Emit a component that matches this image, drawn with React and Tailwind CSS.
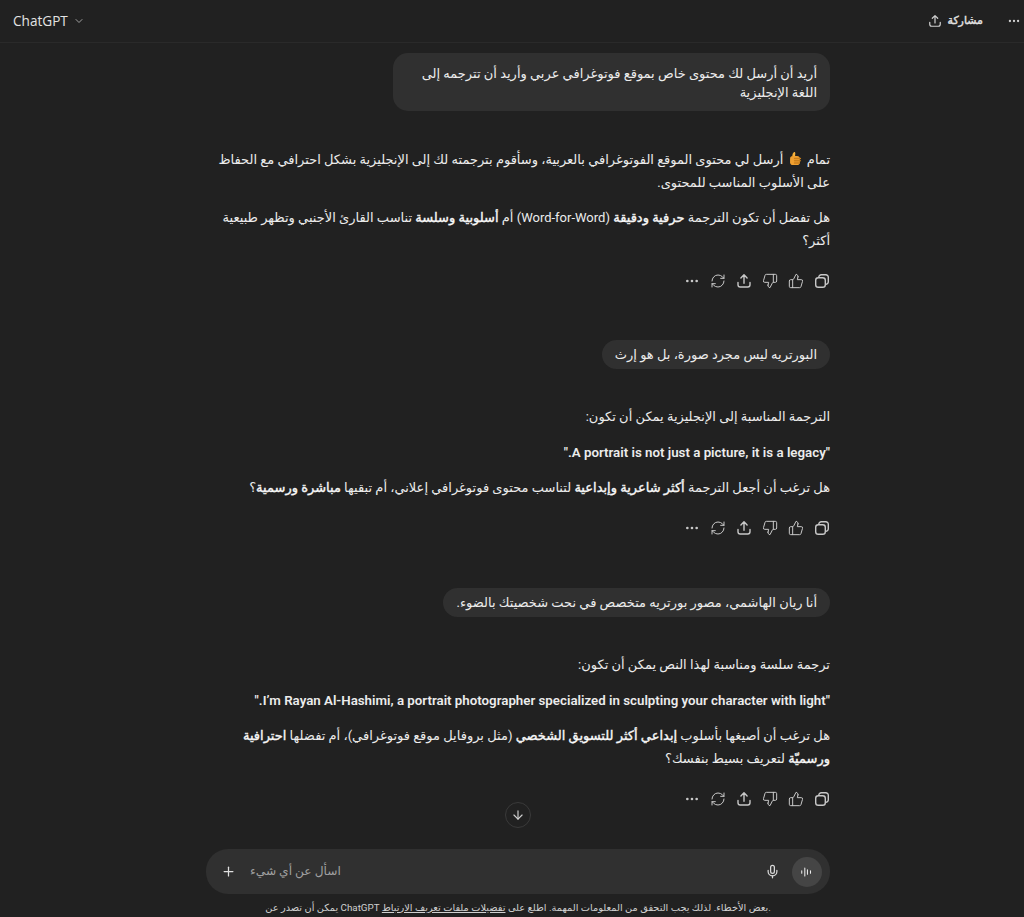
import React from "react";
import { ChevronDown, ThumbsUp, ThumbsDown, RefreshCw, Ellipsis, Plus, Mic, ArrowDown } from "lucide-react";

function ThumbEmoji() {
  return (
    <svg viewBox="0 0 16 16" className="inline-block w-[15px] h-[15px] mx-[1px] align-[-2px]">
      <path d="M6.2 1.2c1-.4 1.7.3 1.6 1.3L7.5 5.6h-3L5 3z" fill="#f7b23b" />
      <rect x="2.2" y="5.4" width="10.4" height="9.6" rx="3" fill="#f0a030" />
      <path d="M7 8h6.2M7 10.4h6M7 12.8h5" stroke="#c97f1c" strokeWidth="1.6" strokeLinecap="round" />
    </svg>
  );
}

function ShareIcon({ size = 16 }) {
  return (
    <svg viewBox="0 0 16 16" width={size} height={size} fill="none" stroke="currentColor" strokeWidth="1.4" strokeLinecap="round" strokeLinejoin="round">
      <path d="M8 10.2V2M4.9 4.9 8 1.8l3.1 3.1" />
      <path d="M2 9.5v2.3A2.2 2.2 0 0 0 4.2 14h7.6a2.2 2.2 0 0 0 2.2-2.2V9.5" />
    </svg>
  );
}

function CopyIcon() {
  return (
    <svg viewBox="0 0 16 16" width="16" height="16" fill="none" stroke="currentColor" strokeWidth="1.4" strokeLinejoin="round">
      <rect x="1.7" y="4.7" width="9.6" height="9.6" rx="2.6" />
      <path d="M4.8 4.6V4.2a2.5 2.5 0 0 1 2.5-2.5h4.5a2.5 2.5 0 0 1 2.5 2.5v4.5a2.5 2.5 0 0 1-2.5 2.5h-.4" />
    </svg>
  );
}

function Actions() {
  return (
    <div className="flex items-center gap-[10px] h-4 text-[#c8c8c8] mt-[21px]">
      <CopyIcon />
      <ThumbsUp size={16} strokeWidth={1.5} />
      <ThumbsDown size={16} strokeWidth={1.5} />
      <ShareIcon />
      <RefreshCw size={16} strokeWidth={1.5} />
      <Ellipsis size={16} strokeWidth={2} />
    </div>
  );
}

function UserBubble({ children, className = "" }) {
  return (
    <div className={"w-fit max-w-[70%] bg-[#303030] rounded-[15px] px-[13px] text-[13px] leading-[19px] text-[#ececec] " + className}>
      {children}
    </div>
  );
}

function Para({ children }) {
  return <p className="text-[13px] leading-[23px] text-[#ececec]">{children}</p>;
}

// arabic bold falls on a much wider face, so thicken the regular one instead
function Strong({ children }) {
  return <span className="[-webkit-text-stroke:0.4px_#ececec] text-white">{children}</span>;
}

function Quote({ children }) {
  return <b className="text-[13.3px] font-semibold">{children}</b>;
}

export default function App() {
  return (
    <div className="h-screen flex flex-col bg-[#212121] overflow-hidden font-['Roboto','DejaVu_Sans',sans-serif]">
      <header className="h-[43px] shrink-0 flex items-center justify-between pl-[13px] pr-[3px] border-b border-[#2a2a2a]">
        <div className="flex items-center gap-[5px] text-[#e3e3e3]">
          <span className="text-[13.6px] font-['Open_Sans']">ChatGPT</span>
          <ChevronDown size={12} className="text-[#a0a0a0]" />
        </div>
        <div className="flex items-center text-[#e3e3e3]">
          <span className="text-[#cfcfcf]"><ShareIcon size={14} /></span>
          <span className="text-[11px] ml-[5px] [-webkit-text-stroke:0.4px_#e3e3e3]">مشاركة</span>
          <Ellipsis size={14} className="ml-[24px] text-[#cfcfcf]" />
        </div>
      </header>

      <main dir="rtl" className="relative flex-1 overflow-hidden pr-[194px] pl-[206px]">
        <div className="pt-[10px] flex flex-col">
          <UserBubble className="pt-[11px] pb-[9px]">أريد أن أرسل لك محتوى خاص بموقع فوتوغرافي عربي وأريد أن تترجمه إلى اللغة الإنجليزية</UserBubble>

          <div className="mt-[37px] flex flex-col gap-[12px]">
            <Para>
              تمام <ThumbEmoji /> أرسل لي محتوى الموقع الفوتوغرافي بالعربية، وسأقوم بترجمته لك إلى الإنجليزية بشكل احترافي مع الحفاظ على الأسلوب المناسب للمحتوى.
            </Para>
            <Para>
              هل تفضل أن تكون الترجمة <Strong>حرفية ودقيقة</Strong> (Word-for-Word) أم <Strong>أسلوبية وسلسة</Strong> تناسب القارئ الأجنبي وتظهر طبيعية أكثر؟
            </Para>
          </div>
          <Actions />

          <UserBubble className="mt-[51px] py-[5px]">البورتريه ليس مجرد صورة، بل هو إرث</UserBubble>

          <div className="mt-[36px] flex flex-col gap-[12.5px]">
            <Para>الترجمة المناسبة إلى الإنجليزية يمكن أن تكون:</Para>
            <Para><Quote>"A portrait is not just a picture, it is a legacy."</Quote></Para>
            <Para>
              هل ترغب أن أجعل الترجمة <Strong>أكثر شاعرية وإبداعية</Strong> لتناسب محتوى فوتوغرافي إعلاني، أم تبقيها <Strong>مباشرة ورسمية</Strong>؟
            </Para>
          </div>
          <Actions />

          <UserBubble className="mt-[52px] py-[5px]">أنا ريان الهاشمي، مصور بورتريه متخصص في نحت شخصيتك بالضوء.</UserBubble>

          <div className="mt-[36px] flex flex-col gap-[12.5px]">
            <Para>ترجمة سلسة ومناسبة لهذا النص يمكن أن تكون:</Para>
            <Para><Quote>"I’m Rayan Al-Hashimi, a portrait photographer specialized in sculpting your character with light."</Quote></Para>
            <Para>
              هل ترغب أن أصيغها بأسلوب <Strong>إبداعي أكثر للتسويق الشخصي</Strong> (مثل بروفايل موقع فوتوغرافي)، أم تفضلها <Strong>احترافية ورسميّة</Strong> لتعريف بسيط بنفسك؟
            </Para>
          </div>
          <Actions />
        </div>

        <button className="absolute left-[505px] top-[759px] w-[26px] h-[26px] rounded-full border border-[#3a3a3a] bg-[#212121] flex items-center justify-center text-[#d0d0d0]">
          <ArrowDown size={14} />
        </button>
      </main>

      <div className="shrink-0 pl-[206px] pr-[194px]">
        <div className="h-[45px] rounded-[22px] bg-[#303030] flex items-center pl-[15px] pr-[8px]">
          <Plus size={15} className="text-[#e0e0e0]" />
          <span dir="rtl" className="ml-[14px] flex-1 text-left text-[12.2px] text-[#a0a0a0]">
            <span className="inline-block">اسأل عن أي شيء</span>
          </span>
          <Mic size={15} className="text-[#d8d8d8]" />
          <span className="ml-[12px] w-[30px] h-[30px] rounded-full bg-[#454545] flex items-center justify-center">
            <svg viewBox="0 0 16 16" className="w-[14px] h-[14px]" stroke="#ececec" strokeWidth="1.2" strokeLinecap="round">
              <path d="M2 6.5v3M5.5 3.5v9M8.5 5.5v5M12 6.5v3" />
            </svg>
          </span>
        </div>
      </div>
      <div className="h-[23px] shrink-0 flex items-center justify-center pl-[12px] pt-[5px] text-[9.8px] text-[#d0d0d0]">
        <span dir="ltr">
          يمكن أن تصدر عن ChatGPT بعض الأخطاء. لذلك يجب التحقق من المعلومات المهمة. اطلع على <u>تفضيلات ملفات تعريف الارتباط</u>.
        </span>
      </div>
    </div>
  );
}
